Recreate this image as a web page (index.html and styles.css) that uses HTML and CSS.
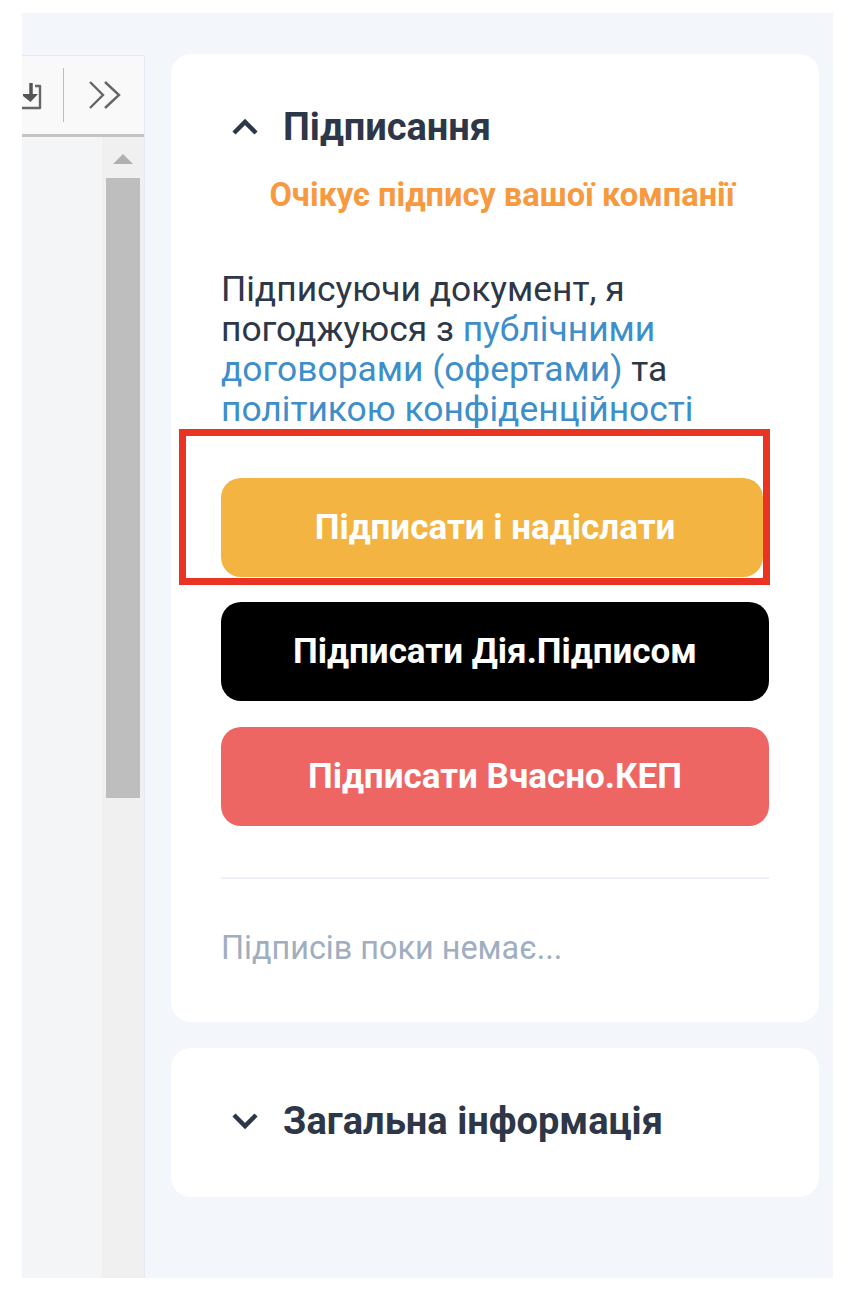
FILE: index.html
```html
<!DOCTYPE html>
<html lang="uk">
<head>
    <meta charset="UTF-8">
    <meta name="viewport" content="width=device-width, initial-scale=1.0">
    <title>Підписання</title>
    <link rel="stylesheet" href="styles.css">
</head>
<body>
    <div class="app">
        <!-- Document viewer, cut off at the left -->
        <div class="viewer">
            <div class="toolbar">
                <svg class="icon-save" width="22" height="36" viewBox="0 0 22 36" fill="none">
                    <path d="M9 6V18" stroke="#555" stroke-width="3.5"/>
                    <path d="M1 17H16L8.500 25L1 19Z" fill="#555"/>
                    <path d="M13 9H18V31H-4" stroke="#666" stroke-width="2.4" stroke-linejoin="round"/>
                </svg>
                <div class="toolbar-sep"></div>
                <svg class="icon-more" width="34" height="32" viewBox="0 0 34 32" fill="none">
                    <path d="M2 3L15 16L2 29M17 3L31 16L17 29" stroke="#666" stroke-width="2.4"/>
                </svg>
            </div>
            <div class="viewer-body">
                <div class="scrollbar">
                    <div class="scroll-arrow"></div>
                    <div class="scroll-thumb"></div>
                </div>
            </div>
        </div>

        <div class="sidebar">
            <!-- Signing card -->
            <div class="card card-sign">
                <div class="card-head">
                    <svg class="chevron" width="28" height="18" viewBox="0 0 28 18" fill="none">
                        <path d="M3 15L14 4L25 15" stroke="#2d3748" stroke-width="4.5"/>
                    </svg>
                    <h2 class="card-title">Підписання</h2>
                </div>
                <div class="status">Очікує підпису вашої компанії</div>
                <p class="terms">Підписуючи документ, я погоджуюся з <a href="#">публічними договорами (офертами)</a> та <a href="#">політикою конфіденційності</a></p>
                <div class="sign-buttons">
                    <button class="btn btn-yellow">Підписати і надіслати</button>
                    <button class="btn btn-black">Підписати Дія.Підписом</button>
                    <button class="btn btn-red">Підписати Вчасно.КЕП</button>
                </div>
                <div class="divider"></div>
                <div class="no-signs">Підписів поки немає...</div>
                <div class="highlight"></div>
            </div>

            <!-- General info card -->
            <div class="card card-info">
                <div class="card-head">
                    <svg class="chevron" width="28" height="18" viewBox="0 0 28 18" fill="none">
                        <path d="M3 3L14 14L25 3" stroke="#2d3748" stroke-width="4.5"/>
                    </svg>
                    <h2 class="card-title">Загальна інформація</h2>
                </div>
            </div>
        </div>
    </div>
</body>
</html>
```
FILE: styles.css
```css
/* General Styles */
body {
    margin: 0;
    padding: 13px 27px 20px 22px;
    background-color: #fff;
    font-family: Roboto, "Liberation Sans", sans-serif;
}

.app {
    display: flex;
    height: 1265px;
    background-color: #f3f6fa;
}

/* Viewer */
.viewer {
    width: 122px;
    margin-top: 42px;
    border-right: 1px solid #e6eaf4;
    display: flex;
    flex-direction: column;
}

.toolbar {
    height: 82px;
    box-sizing: border-box;
    border-top: 1px solid #e6eaf4;
    border-bottom: 3px solid #c4c4c4;
    background-color: #f9f9f9;
    display: flex;
    align-items: center;
}

.icon-save {
    flex-shrink: 0;
}

.toolbar-sep {
    width: 1px;
    height: 54px;
    margin-left: 19px;
    margin-right: 24px;
    background-color: #bcbcbc;
}

.viewer-body {
    flex: 1;
    display: flex;
    justify-content: flex-end;
    background-color: #f4f5f7;
}

.scrollbar {
    width: 42px;
    padding: 0 4px;
    box-sizing: border-box;
    background-color: #f0f0f0;
}

.scroll-arrow {
    width: 0;
    height: 0;
    margin: 17px auto 14px;
    border-left: 10px solid transparent;
    border-right: 10px solid transparent;
    border-bottom: 10px solid #b0b0b0;
}

.scroll-thumb {
    height: 620px;
    background-color: #bebebe;
}

/* Sidebar */
.sidebar {
    width: 648px;
    margin-left: 26px;
    padding-top: 41px;
    display: flex;
    flex-direction: column;
    gap: 26px;
}

.card {
    position: relative;
    box-sizing: border-box;
    padding: 0 50px;
    background-color: #fff;
    border-radius: 20px;
}

.card-sign {
    height: 968px;
    padding-top: 50px;
}

.card-info {
    height: 149px;
    padding-top: 50px;
}

.card-head {
    display: flex;
    align-items: center;
    gap: 24px;
    margin-left: 10px;
}

.chevron {
    flex-shrink: 0;
}

.card-title {
    margin: 0;
    font-size: 38px;
    line-height: 46px;
    font-weight: 700;
    color: #2d3748;
}

.status {
    margin-top: 26px;
    padding-left: 14px;
    text-align: center;
    font-size: 32.6px;
    line-height: 38px;
    font-weight: 700;
    color: #f6993f;
}

.terms {
    margin: 55px 0 0;
    font-size: 35.4px;
    line-height: 40px;
    color: #2d3748;
}

.terms a {
    color: #3d8ec9;
    text-decoration: none;
}

/* Buttons */
.sign-buttons {
    margin-top: 49px;
    display: flex;
    flex-direction: column;
    gap: 25px;
}

.btn {
    height: 99px;
    border: none;
    border-radius: 20px;
    padding: 0;
    color: #fff;
    font-family: inherit;
    font-size: 35px;
    font-weight: 700;
}

.btn-yellow {
    margin-right: 6px;
    padding-left: 6px;
    background-color: #f3b441;
}

.btn-black {
    background-color: #000;
}

.btn-red {
    margin-top: 1px;
    background-color: #ee6664;
}

.divider {
    height: 2px;
    margin-top: 51px;
    background-color: #edf0f8;
}

.no-signs {
    margin-top: 50px;
    font-size: 32.4px;
    line-height: 38px;
    color: #a0aec0;
}

/* Red box laid over the first button */
.highlight {
    position: absolute;
    left: 8px;
    top: 375px;
    width: 591px;
    height: 156px;
    box-sizing: border-box;
    border: 7px solid #e93424;
}
```
